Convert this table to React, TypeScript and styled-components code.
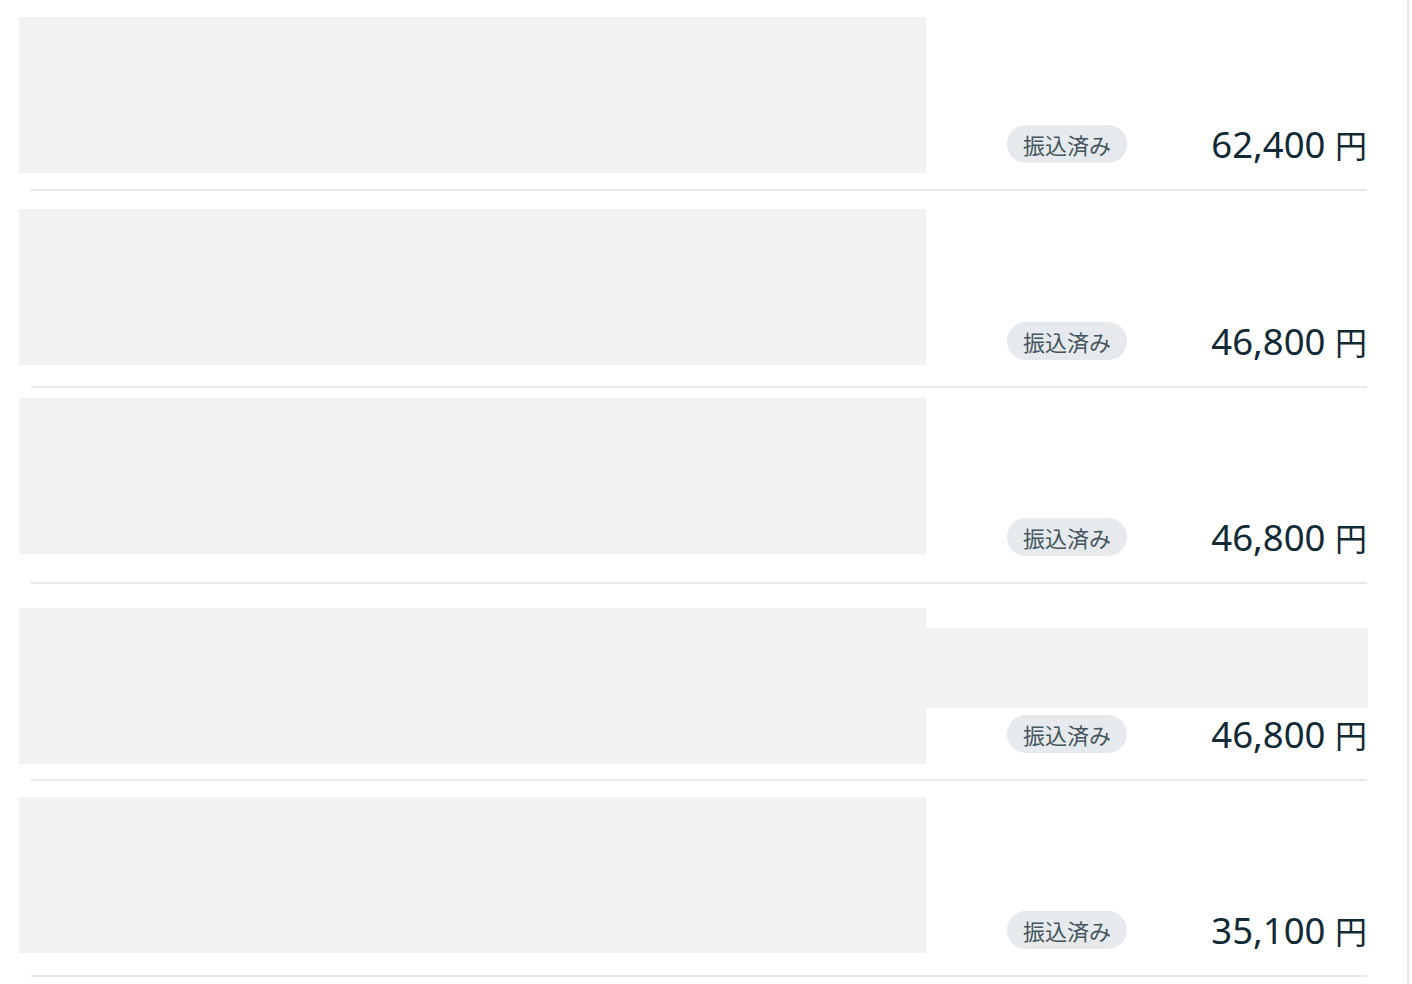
import styled, { createGlobalStyle } from "styled-components";

const GlobalStyle = createGlobalStyle`
  html, body {
    margin: 0;
    padding: 0;
    background: #ffffff;
  }
  body {
    font-family: "Noto Sans", "Noto Sans CJK JP", sans-serif;
  }
`;

type Payout = {
  amount: string;
  offset: number;
  masked?: boolean;
};

const payouts: Payout[] = [
  { amount: "62,400", offset: 17 },
  { amount: "46,800", offset: 18 },
  { amount: "46,800", offset: 10.5 },
  { amount: "46,800", offset: 24, masked: true },
  { amount: "35,100", offset: 16.5 },
];

export default function App() {
  return (
    <>
      <GlobalStyle />
      <Page>
        <List>
          {payouts.map((p, i) => (
            <Row key={i}>
              <Content>
                <Thumb $offset={p.offset} />
                <Meta>
                  <Badge>振込済み</Badge>
                  <Amount>
                    {p.amount} <Yen>円</Yen>
                  </Amount>
                </Meta>
              </Content>
              <Rule />
              {p.masked && <Mask />}
            </Row>
          ))}
        </List>
      </Page>
    </>
  );
}

const Page = styled.div`
  width: 1407px;
  min-height: 984px;
  border-right: 2px solid #e6e9e9;
  box-sizing: content-box;
  overflow: hidden;
`;

const List = styled.div`
  display: flex;
  flex-direction: column;
  padding: 0 40px 0 19px;
`;

const Row = styled.div`
  position: relative;
  display: flex;
  flex-direction: column;
  height: 196.5px;

  &:first-child {
    height: 191px;
  }
`;

const Content = styled.div`
  flex: 1;
  display: flex;
`;

const Thumb = styled.div<{ $offset: number }>`
  flex-shrink: 0;
  width: 907px;
  height: 156px;
  margin-top: ${(p) => p.$offset}px;
  background: #f2f2f2;
`;

const Meta = styled.div`
  flex: 1;
  align-self: flex-end;
  display: flex;
  align-items: center;
  justify-content: flex-end;
  padding-bottom: 21px;
`;

const Badge = styled.span`
  display: inline-flex;
  align-items: center;
  height: 38px;
  padding: 0 16px;
  border-radius: 19px;
  background: #e6eaec;
  color: #45565e;
  font-family: "Noto Sans CJK JP", sans-serif;
  font-size: 22px;
  line-height: 1;
`;

const Amount = styled.div`
  width: 240px;
  text-align: right;
  color: #112a36;
  font-family: "Noto Sans", "Noto Sans CJK JP", sans-serif;
  font-size: 36.5px;
  line-height: 48px;
  white-space: nowrap;
`;

const Yen = styled.span`
  font-family: "Noto Sans CJK JP", sans-serif;
  font-size: 32px;
`;

const Rule = styled.div`
  height: 2px;
  margin-left: 12px;
  background: #e6e9e9;
`;

const Mask = styled.div`
  position: absolute;
  top: 44px;
  left: 907px;
  width: 442px;
  height: 80px;
  background: #f2f2f2;
`;
